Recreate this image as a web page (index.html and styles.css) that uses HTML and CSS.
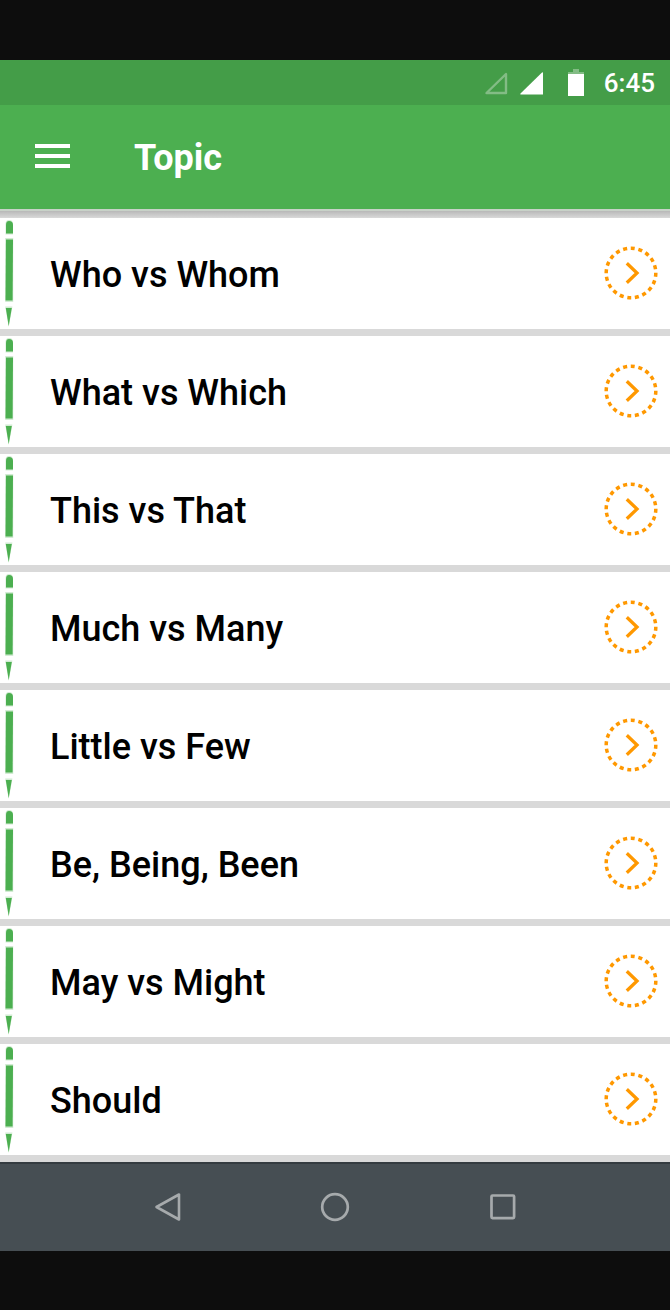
FILE: index.html
```html
<!DOCTYPE html>
<html lang="en">
<head>
<meta charset="utf-8">
<meta name="viewport" content="width=device-width, initial-scale=1">
<title>Topic</title>
<link rel="stylesheet" href="styles.css">
</head>
<body>
<svg class="defs" width="0" height="0" aria-hidden="true">
  <symbol id="pencil" viewBox="0 0 18 111">
    <path d="M5.500 16.500V6q0-4 3.500-4 4 0 4 4v10.500zM5.200 20h8v64h-8zM5.200 88.500h7.200L8.700 109z" opacity=".25"/>
    <path d="M6 15.500V7q0-4 3-4 4 0 4 4v8.500z"/>
    <path d="M6 21.500h7l-.4 61H5.500z"/>
    <path d="M5.800 90h6L8.700 108z"/>
  </symbol>
  <symbol id="go" viewBox="0 0 54 54">
    <circle cx="27" cy="27" r="24.800" pathLength="200" fill="none" stroke="currentColor" stroke-width="3.500" stroke-dasharray="5.200 4.800" stroke-dashoffset=".3"/>
    <path d="M22.800 17.200 33 27 22.800 36.800" fill="none" stroke="currentColor" stroke-width="3.300"/>
  </symbol>
</svg>
<div class="screen">
  <header class="top">
    <div class="status">
      <svg class="status-signal" width="24" height="24" viewBox="0 0 24 24"><path d="M2.500 22 22 3v19z" fill="none" stroke="#83bc85" stroke-width="2.400" stroke-linejoin="round"/></svg>
      <svg class="status-signal" width="24" height="24" viewBox="0 0 24 24"><path d="M.5 23.500Q0 23 .5 22.500L22 1.500q1-.8 1 .5v21.500z" fill="#fff"/></svg>
      <svg class="status-battery" width="16" height="28" viewBox="0 0 16 28"><path d="M5 0h6v3h5v3H0V3h5z" fill="#83bc85"/><path d="M0 5h16v22H0z" fill="#fff"/></svg>
      <span class="status-time">6:45</span>
    </div>
    <div class="appbar">
      <button class="menu" aria-label="Menu"><svg width="35" height="24" viewBox="0 0 35 24"><path d="M0 0h35v4H0zM0 10h35v4H0zM0 20h35v4H0z" fill="#fff"/></svg></button>
      <h1 class="title">Topic</h1>
    </div>
  </header>
  <main class="content">
    <ul class="topics">
      <li><button class="topic"><svg class="mark"><use href="#pencil"/></svg><span class="label">Who vs Whom</span><svg class="go"><use href="#go"/></svg></button></li>
      <li><button class="topic"><svg class="mark"><use href="#pencil"/></svg><span class="label">What vs Which</span><svg class="go"><use href="#go"/></svg></button></li>
      <li><button class="topic"><svg class="mark"><use href="#pencil"/></svg><span class="label">This vs That</span><svg class="go"><use href="#go"/></svg></button></li>
      <li><button class="topic"><svg class="mark"><use href="#pencil"/></svg><span class="label">Much vs Many</span><svg class="go"><use href="#go"/></svg></button></li>
      <li><button class="topic"><svg class="mark"><use href="#pencil"/></svg><span class="label">Little vs Few</span><svg class="go"><use href="#go"/></svg></button></li>
      <li><button class="topic"><svg class="mark"><use href="#pencil"/></svg><span class="label">Be, Being, Been</span><svg class="go"><use href="#go"/></svg></button></li>
      <li><button class="topic"><svg class="mark"><use href="#pencil"/></svg><span class="label">May vs Might</span><svg class="go"><use href="#go"/></svg></button></li>
      <li><button class="topic"><svg class="mark"><use href="#pencil"/></svg><span class="label">Should</span><svg class="go"><use href="#go"/></svg></button></li>
    </ul>
  </main>
  <nav class="nav">
    <button class="nav-button" aria-label="Back"><svg width="32" height="32" viewBox="0 0 32 32"><path d="M27 3.500v25L4.500 16z" fill="none" stroke="#a6aaac" stroke-width="2.600" stroke-linejoin="round"/></svg></button>
    <button class="nav-button" aria-label="Home"><svg width="32" height="32" viewBox="0 0 32 32"><circle cx="16" cy="16" r="12.800" fill="none" stroke="#a6aaac" stroke-width="2.700"/></svg></button>
    <button class="nav-button" aria-label="Recent apps"><svg width="32" height="32" viewBox="0 0 32 32"><rect x="4.500" y="4.500" width="22.600" height="22.600" rx="1" fill="none" stroke="#a6aaac" stroke-width="2.700"/></svg></button>
  </nav>
</div>
</body>
</html>
```
FILE: styles.css
```css
* {
  box-sizing: border-box;
}

body {
  margin: 0;
  background: #0d0d0d;
  font-family: Roboto, "Liberation Sans", sans-serif;
}

button {
  margin: 0;
  padding: 0;
  border: 0;
  background: none;
  font: inherit;
  color: inherit;
  text-align: left;
}

svg {
  display: block;
  flex: none;
}

.defs {
  position: absolute;
}

.screen {
  padding: 60px 0 59px;
}

.top {
  color: #fff;
  background: #4caf50;
}

.status {
  display: flex;
  align-items: center;
  justify-content: flex-end;
  min-height: 45px;
  padding-right: 15px;
  background: #449d48;
}

.status-signal {
  margin-right: 12px;
}

.status-battery {
  margin: 0 20px 0 12px;
}

.status-time {
  font-size: 26px;
  line-height: 32px;
  font-weight: 500;
}

.appbar {
  display: flex;
  align-items: center;
  gap: 64px;
  min-height: 104px;
  padding: 0 35px 2px;
}

.title {
  margin: 0;
  padding-top: 4px;
  font-size: 36px;
  line-height: 48px;
  font-weight: 700;
}

.content {
  padding: 9px 0 7px;
  background: #d9d9d9 linear-gradient(#c8d2c8 2px, #b8b8b8 2px, #d9d9d9 9px);
}

.topics {
  display: grid;
  gap: 7px;
  margin: 0;
  padding: 0;
  list-style: none;
}

.topic {
  display: flex;
  align-items: center;
  width: 100%;
  padding-right: 12px;
  background: #fff;
  color: #000;
}

.mark {
  width: 18px;
  height: 111px;
  fill: #4caf50;
}

.label {
  flex: 1;
  padding: 2px 0 0 32px;
  font-size: 36px;
  line-height: 48px;
  font-weight: 500;
}

.go {
  width: 54px;
  height: 54px;
  margin-bottom: 2px;
  color: #ff9800;
}

.nav {
  display: grid;
  grid-template-columns: repeat(3, 1fr);
  padding: 0 12.5% 2px;
  min-height: 89px;
  background: #464e53;
  border-top: 2px solid #343b40;
}

.nav-button {
  display: grid;
  place-items: center;
}
```
